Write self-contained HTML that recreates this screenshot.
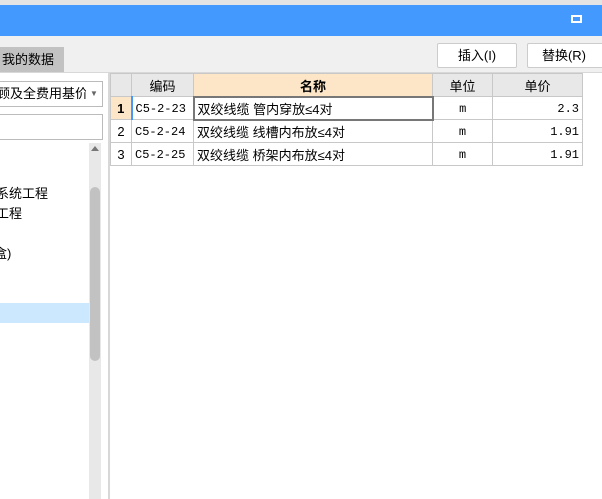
<!DOCTYPE html><html><head><meta charset="utf-8"><style>
*{margin:0;padding:0;box-sizing:border-box}
body{width:602px;height:499px;overflow:hidden;background:#fff;font-family:"Liberation Sans","Noto Sans CJK SC",sans-serif;font-size:12px;position:relative;color:#000}
.a{position:absolute}
table{border-collapse:collapse;position:absolute;left:110px;top:73px}
td{border:1px solid #c8c8c8;height:23px;padding:1px 3px 0;white-space:nowrap;font-size:13px}
.h td{background:#e8e8e8;text-align:center;font-size:13px}
td.m{font-family:"Liberation Mono","Noto Sans CJK SC",monospace;font-size:12px}
</style></head><body>
<div class="a" style="left:0;top:0;width:602px;height:5px;background:#e4e4e4"></div>
<div class="a" style="left:0;top:5px;width:602px;height:31px;background:#4499ff"></div>
<div class="a" style="left:571px;top:15px;width:11px;height:8px;border:2px solid #fff"></div>
<div class="a" style="left:0;top:36px;width:602px;height:36px;background:#f0f0f0"></div>
<div class="a" style="left:0;top:47px;width:64px;height:25px;background:#c2c2c2;font-size:13px;line-height:25px;padding-left:2px">我的数据</div>
<div class="a" style="left:437px;top:43px;width:80px;height:25px;background:#fff;border:1px solid #ccc;border-radius:2px;text-align:center;line-height:23px;font-size:13px">插入(I)</div>
<div class="a" style="left:527px;top:43px;width:80px;height:25px;background:#fff;border:1px solid #ccc;border-radius:2px;text-align:center;line-height:23px;font-size:13px;padding-right:6px">替换(R)</div>
<div class="a" style="left:0;top:72px;width:602px;height:1px;background:#d8d8d8"></div>
<div class="a" style="left:-4px;top:81px;width:107px;height:26px;border:1px solid #bbb;font-size:13px;line-height:24px;overflow:hidden;white-space:nowrap">顾及全费用基价表</div>
<div class="a" style="left:86px;top:82px;width:16px;height:24px;background:#fff;font-size:8px;line-height:24px;color:#666;text-align:center">▼</div>
<div class="a" style="left:-2px;top:114px;width:105px;height:26px;border:1px solid #bbb"></div>
<div class="a" style="left:89px;top:143px;width:12px;height:356px;background:#e8e8e8"></div>
<div class="a" style="left:91px;top:146px;width:0;height:0;border:4px solid transparent;border-bottom:5px solid #777;border-top:0"></div>
<div class="a" style="left:90px;top:187px;width:10px;height:174px;background:#c2c2c2;border-radius:5px"></div>
<div class="a" style="left:0;top:303px;width:89px;height:20px;background:#cce8ff"></div>
<div class="a" style="left:-4px;top:183px;font-size:13px">系统工程</div>
<div class="a" style="left:-4px;top:203px;font-size:13px">工程</div>
<div class="a" style="left:-6px;top:243px;font-size:13px">盒)</div>
<div class="a" style="left:108px;top:73px;width:2px;height:426px;background:#d8d8d8"></div>
<table>
<tr class="h"><td style="width:21px"></td><td style="width:62px">编码</td><td style="width:239px;background:#fde6c8;font-weight:bold">名称</td><td style="width:60px">单位</td><td style="width:90px">单价</td></tr>
<tr><td style="background:#fde6c8;text-align:center;font-weight:bold;border-right:2px solid #4499ff">1</td><td class="m">C5-2-23</td><td style="border:2px solid #777">双绞线缆 管内穿放≤4对</td><td class="m" style="text-align:center">m</td><td class="m" style="text-align:right">2.3</td></tr>
<tr><td style="text-align:center">2</td><td class="m">C5-2-24</td><td>双绞线缆 线槽内布放≤4对</td><td class="m" style="text-align:center">m</td><td class="m" style="text-align:right">1.91</td></tr>
<tr><td style="text-align:center">3</td><td class="m">C5-2-25</td><td>双绞线缆 桥架内布放≤4对</td><td class="m" style="text-align:center">m</td><td class="m" style="text-align:right">1.91</td></tr>
</table>
</body></html>
